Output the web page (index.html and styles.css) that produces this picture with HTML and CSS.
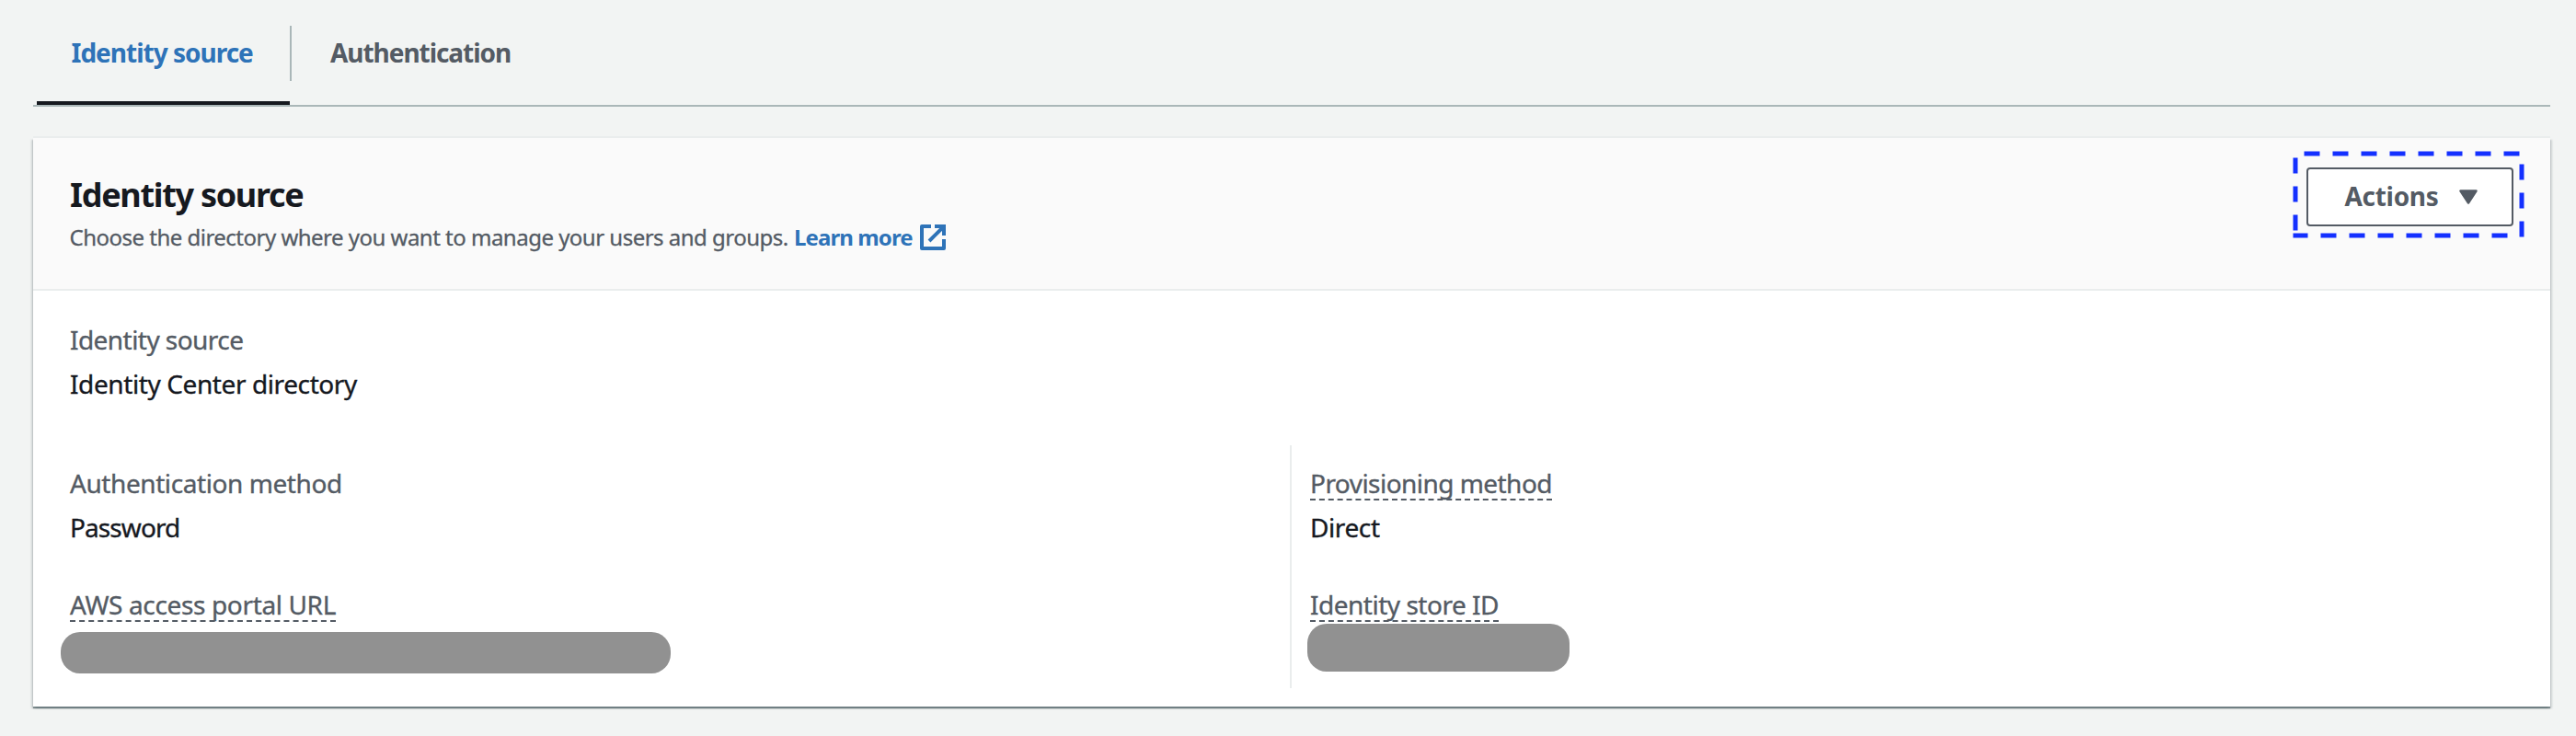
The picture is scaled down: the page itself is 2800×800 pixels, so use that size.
FILE: index.html
```
<!DOCTYPE html>
<html lang="en">
<head>
<meta charset="utf-8">
<title>Identity source</title>
<link rel="stylesheet" href="styles.css">
</head>
<body>
<main class="page">
  <nav class="tabs">
    <a class="tab tab-active">Identity source</a>
    <span class="tab-divider"></span>
    <a class="tab tab-second">Authentication</a>
  </nav>
  <section class="card">
    <header class="card-header">
      <div>
        <h2 class="title">Identity source</h2>
        <p class="description"><span class="description-text">Choose the directory where you want to manage your users and groups.</span><a class="learn-more">Learn more</a><svg class="external" width="28" height="28" viewBox="0 0 28 28" fill="none" stroke="currentColor" stroke-width="4"><path d="M12 2H2v24h24V16" stroke-linejoin="round"/><path d="M16 2h10v10M10 18 25 3"/></svg></p>
      </div>
      <div class="actions">
        <button class="button">Actions<svg class="caret" width="20" height="16" viewBox="0 0 20 16"><path d="M1.5 1.5h17L10 14.5z" fill="currentColor" stroke="currentColor" stroke-width="2.5" stroke-linejoin="round"/></svg></button>
        <svg class="highlight" width="252" height="95" viewBox="0 0 252 95" fill="none" stroke="#1430ff" stroke-width="5" stroke-dasharray="17 14">
          <path d="M12.5 3H247"/><path d="M249 14.5V94"/><path d="M233.5 92H16.5"/><path d="M16.5 92H0.5" stroke-dasharray="none"/><path d="M3 86.500V7"/>
        </svg>
      </div>
    </header>
    <div class="card-body">
      <div class="field">
        <div class="label t-source">Identity source</div>
        <div class="value t-directory">Identity Center directory</div>
      </div>
      <div class="columns">
        <div class="column">
          <div class="field">
            <div class="label t-auth">Authentication method</div>
            <div class="value t-password">Password</div>
          </div>
          <div class="field">
            <div class="label label-hint t-portal">AWS access portal URL</div>
            <div class="redacted redacted-url"></div>
          </div>
        </div>
        <div class="column column-split">
          <div class="field">
            <div class="label label-hint t-provisioning">Provisioning method</div>
            <div class="value t-direct">Direct</div>
          </div>
          <div class="field">
            <div class="label label-hint t-store">Identity store ID</div>
            <div class="redacted redacted-store"></div>
          </div>
        </div>
      </div>
    </div>
  </section>
</main>
</body>
</html>
```
FILE: styles.css
```
* { box-sizing: border-box; }
body {
  margin: 0;
  background: #f2f4f3;
  color: #16191f;
  font: 28px/44px "Noto Sans", "Open Sans", sans-serif;
  white-space: nowrap;
}
.page { height: 800px; padding: 0 28px 0 36px; }

.tabs {
  display: flex;
  height: 116px;
  padding-left: 4px;
  border-bottom: 2px solid #aab7b8;
}
.tab {
  padding-top: 35px;
  color: #545b64;
  font-weight: 700;
}
.tab-active {
  width: 275px;
  padding-left: 37.5px;
  border-bottom: 4px solid #16191f;
  color: #2e73b8;
  letter-spacing: -1px;
}
.tab-divider { width: 2px; height: 60px; margin-top: 28px; background: #aab7b8; }
.tab-second { padding-left: 42px; letter-spacing: -1.05px; }

.card {
  height: 618px;
  margin-top: 34px;
  background: #fff;
  box-shadow: 0 2px 1px rgba(0, 28, 36, .4), 2px 2px 2px rgba(0, 28, 36, .15), -2px 2px 2px rgba(0, 28, 36, .15), 0 -2px 0 #eaeded;
}
.card-header {
  display: flex;
  justify-content: space-between;
  height: 166px;
  padding: 32px 40px 0 40px;
  border-bottom: 2px solid #eaeded;
  background: #fafafa;
}
.title {
  margin: 8px 0 6px;
  font-size: 36px;
  line-height: 44px;
  letter-spacing: -1.3px;
}
.description {
  display: flex;
  margin: 0;
  color: #545b64;
  font-size: 24px;
  line-height: 36px;
  -webkit-text-stroke: .3px;
}
.description-text { width: 787.5px; letter-spacing: -.51px; margin-left: -.5px; }
.learn-more {
  width: 137px;
  color: #2e73b8;
  font-weight: 700;
  letter-spacing: -.9px;
  -webkit-text-stroke: 0;
}
.external { margin-top: 4px; color: #2e73b8; }

.actions { position: relative; height: 64px; }
.button {
  display: flex;
  width: 225px;
  height: 64px;
  padding: 0 0 0 39.5px;
  border: 2px solid #545b64;
  border-radius: 4px;
  background: #fff;
  color: #545b64;
  font: 700 28px/59px "Noto Sans", "Open Sans", sans-serif;
  letter-spacing: -.3px;
}
.caret { margin: 22px 0 0 22px; }
/* Dashed callout drawn around the button */
.highlight { position: absolute; left: -15px; top: -18px; pointer-events: none; }

.card-body { padding: 31px 0 0 40px; -webkit-text-stroke: .35px; }
.label {
  width: fit-content;
  margin: 5px 0 7px;
  border-bottom: 2px solid transparent;
  color: #545b64;
  line-height: 34px;
}
.label-hint { border-bottom: 2px dashed #545b64; }
.value { height: 44px; }
.columns {
  display: grid;
  grid-template-columns: 1326px 1fr;
  margin-top: 45px;
}
.column { display: flow-root; height: 264px; padding-top: 19px; }
.column .field + .field { margin-top: 40px; }
.column-split { padding-left: 20px; border-left: 2px solid #eaeded; }
.field { display: flow-root; }

.redacted { background: #919191; border-radius: 21px; }
.redacted-url { width: 663px; height: 45px; margin: 11px 0 0 -10px; }
.redacted-store { width: 285px; height: 52px; margin: -5px 0 0 -3px; }

.t-source { letter-spacing: -.55px; }
.t-directory { letter-spacing: -.4px; }
.t-auth { letter-spacing: -.42px; }
.t-password { letter-spacing: -.9px; }
.t-portal { letter-spacing: -.36px; }
.t-provisioning { letter-spacing: -.54px; }
.t-direct { letter-spacing: -.4px; }
.t-store { letter-spacing: -.49px; }
```
